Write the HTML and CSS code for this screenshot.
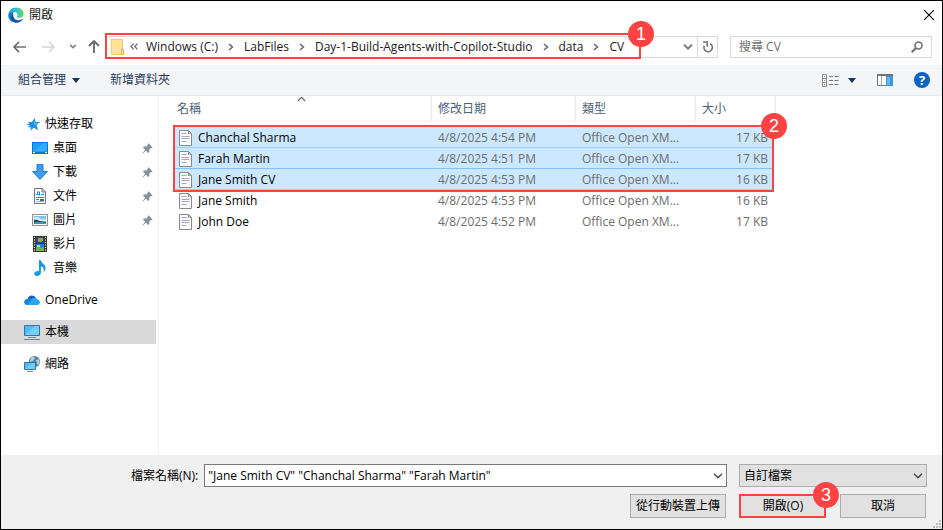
FILE: index.html
```html
<!DOCTYPE html>
<html lang="zh-Hant">
<head>
<meta charset="utf-8">
<title>開啟</title>
<link rel="stylesheet" href="styles.css">
</head>
<body>
<svg class="defs" aria-hidden="true">
  <symbol id="chev-right" viewBox="0 0 6 8"><path d="M1 1l3.400 3L1 7" fill="none" stroke="#6b6b6b" stroke-width="1.600"/></symbol>
  <symbol id="chev-down" viewBox="0 0 10 6"><path d="M1 .8l4 4 4-4" fill="none" stroke="currentColor" stroke-width="1.300"/></symbol>
  <symbol id="pin" viewBox="0 0 12 12"><path d="M7.200.4l4.400 4.400-1.200.9-.8-.2-1.700 1.900.1 2.300-1.200 1.200-2.400-2.500L.8 11.500l-.4-.4 3.200-3.700L1 4.900l1.200-1.200 2.400.2L6.500 2l-.2-.8z" fill="#84929d"/></symbol>
  <symbol id="doc" viewBox="0 0 13 16"><path d="M.5.5h9l3 3v12H.5z" fill="#fafafa" stroke="#8a8a8a"/><path d="M9 0v4h4z" fill="#8a8a8a"/><path d="M10 2v1.500h1.500z" fill="#fff"/><path d="M2.500 3.500h5M2.500 6.500h8M2.500 8.500h8M2.500 11.500h5" stroke="#a9a6c6"/></symbol>
</svg>
<div class="window">
  <header class="titlebar">
    <svg class="edge" viewBox="0 0 17 17"><defs><linearGradient id="eg" x1="0" x2="1"><stop offset="0" stop-color="#199bdc"/><stop offset=".5" stop-color="#2fc2d2"/><stop offset="1" stop-color="#69d55b"/></linearGradient></defs><path d="M.3 9C.5 3.800 4 .4 8.600.4c4.700 0 8 3.100 8 6.700 0 2.700-2.200 4.400-4.700 4.400-1.600 0-2.500-.5-2.500-1.100 0-.5.8-.8.8-2.100 0-1.600-1.600-3-3.900-3C3.400 5.300.9 6.700.3 9z" fill="url(#eg)"/><path d="M.3 9c.3-2.600 2.900-3.800 5.600-3.700C3.700 9.500 6.500 14.500 10 15c-.9 1-1.800 1.500-3.200 1.300C3 15.800.2 12.700.3 9z" fill="#1478cf"/><path d="M5.700 8c-.8 4 2.800 6.600 6 6.100 1.500-.2 2.800-.9 3.600-1.300.4-.1.5.2.3.5-1.600 2.300-4.100 3.600-7 3.400-3.500-.5-5.500-3.500-5.300-6.200.1-1.300 1-2.200 2.400-2.500z" fill="#0e4f9b"/></svg>
    <h1>開啟</h1>
    <button class="bare close" aria-label="關閉"><svg viewBox="0 0 10 10"><path d="M0 0l10 10M10 0L0 10" stroke="#000" stroke-width="1.100"/></svg></button>
  </header>

  <div class="navrow">
    <nav class="history">
      <button class="bare" aria-label="上一頁"><svg class="arrow" viewBox="0 0 13 12"><path d="M6 .8L1 6l5 5.200M1 6h12" fill="none" stroke="#707070" stroke-width="1.700"/></svg></button>
      <button class="bare" aria-label="下一頁"><svg class="arrow" viewBox="0 0 13 12"><path d="M7 .8L12 6l-5 5.200M12 6H0" fill="none" stroke="#d5d5d5" stroke-width="1.600"/></svg></button>
      <button class="bare recent" aria-label="最近的位置"><svg class="tiny" viewBox="0 0 10 6"><path d="M1.500 1L5 4.500 8.500 1" fill="none" stroke="#808080" stroke-width="2"/></svg></button>
      <button class="bare" aria-label="上移"><svg class="up" viewBox="0 0 12 13"><path d="M1 6l5-5 5 5M6 1v12" fill="none" stroke="#6c6c6c" stroke-width="1.900"/></svg></button>
    </nav>
    <div class="address">
      <ol class="crumbs">
        <li><svg class="folder" viewBox="0 0 13 16"><path d="M0 0h12v10h1v6H0z" fill="#f2cf63"/><path d="M1 1h10v14H1z" fill="#ffe494"/><path d="M10.500 10h2v5.500h-2z" fill="#ffe69b" stroke="#dfb64c"/></svg></li>
        <li><svg class="more" viewBox="0 0 8 7"><path d="M3.600.6L1 3.500l2.600 2.900M7.400.6L4.800 3.500l2.600 2.900" fill="none" stroke="#6b6b6b" stroke-width="1.200"/></svg></li>
        <li><a href="#">Windows (C:)</a><svg class="sep"><use href="#chev-right"/></svg></li>
        <li><a href="#">LabFiles</a><svg class="sep"><use href="#chev-right"/></svg></li>
        <li><a href="#">Day-1-Build-Agents-with-Copilot-Studio</a><svg class="sep"><use href="#chev-right"/></svg></li>
        <li><a href="#">data</a><svg class="sep"><use href="#chev-right"/></svg></li>
        <li><a href="#">CV</a></li>
      </ol>
      <button class="bare history-drop" aria-label="先前的位置"><svg class="drop" viewBox="0 0 10 6"><path d="M1 .7l4 4 4-4" fill="none" stroke="#777" stroke-width="1.900"/></svg></button>
      <button class="bare refresh" aria-label="重新整理"><svg viewBox="0 0 12 13"><path d="M8 3.700A4.200 4.200 0 1 1 2.300 5.800" fill="none" stroke="#757575" stroke-width="1.700"/><path d="M1 2h4.200v4.500" fill="none" stroke="#757575" stroke-width="1.700"/></svg></button>
      <div class="mark mark-path"><span class="badge">1</span></div>
    </div>
    <div class="search">
      <input type="search" placeholder="搜尋 CV" aria-label="搜尋 CV">
      <svg viewBox="0 0 12 12"><circle cx="7.500" cy="4.500" r="3.500" fill="none" stroke="#707070" stroke-width="1.600"/><path d="M5 7L.8 11.200" stroke="#707070" stroke-width="2.200"/></svg>
    </div>
  </div>

  <div class="toolbar">
    <button class="bare">組合管理<svg class="tri" viewBox="0 0 8 5"><path d="M0 0h8L4 5z" fill="#16365f"/></svg></button>
    <button class="bare">新增資料夾</button>
    <div class="tools">
      <button class="bare view" aria-label="檢視"><svg class="list-icon" viewBox="0 0 17 13"><path d="M.5.500h4v12h-4zM.5 4.500h4M.5 8.500h4" fill="#fff" stroke="#8b8b8b"/><path d="M2 2h1v1H2z" fill="#58a"/><path d="M2 6h1v1H2z" fill="#696"/><path d="M2 10h1v1H2z" fill="#c33"/><path d="M7 2.500h4M12.500 2.500h4M7 6.500h4M12.500 6.500h4M7 10.500h4M12.500 10.500h4" stroke="#777"/></svg><svg class="tri" viewBox="0 0 8 5"><path d="M0 0h8L4 5z" fill="#16365f"/></svg></button>
      <button class="bare" aria-label="預覽窗格"><svg class="pane" viewBox="0 0 16 12"><path d="M.5.500h15v11H.5z" fill="#fff" stroke="#747474"/><path d="M0 0h16v2H0z" fill="#747474"/><path d="M4.500 2v9" stroke="#aaa"/><path d="M9 2h7v10H9z" fill="#3996dc"/><path d="M10 3h3v8h-3z" fill="#67b5ee"/></svg></button>
      <button class="bare" aria-label="說明"><span class="help">?</span></button>
    </div>
  </div>

  <main class="body">
    <nav class="side">
      <a class="item root" href="#"><svg class="star" viewBox="0 0 14 13"><path d="M8.500 0l1.200 4 4.300-.1-3.500 2.900 1.600 5.400-4.300-2.500-3.600 3.100.8-3.600H1.500L4.300 7H0l3.500-1.600L2 4h4z" fill="#1e92e0"/><path d="M8.300 2.500l.7 2.400 2.500.2-2.200 1.500-1.500-.2z" fill="#63bff7"/></svg>快速存取</a>
      <a class="item" href="#"><svg class="icon" viewBox="0 0 16 16"><path d="M0 2h16v12H0z" fill="#0a77cf"/><path d="M1 3h14v8.500H1z" fill="#18a0fa"/><path d="M1 11.500L12 3h3v8.500z" fill="#35acfb"/><path d="M1 12.500h2M13 12.500h2" stroke="#fff"/></svg>桌面<svg class="pin"><use href="#pin"/></svg></a>
      <a class="item" href="#"><svg class="icon" viewBox="0 0 16 16"><path d="M5 .5h6v7h4.500L8 15.500.5 7.500H5z" fill="#3e9be9" stroke="#2a7fce"/></svg>下載<svg class="pin"><use href="#pin"/></svg></a>
      <a class="item" href="#"><svg class="icon" viewBox="0 0 16 16"><path d="M2.500.5h8l3 3v12h-11z" fill="#fff" stroke="#777"/><path d="M10 0v4h4" fill="#ccc" stroke="#777"/><path d="M4 6.500h3M6 3.500L5 7M5.500 4h2v3.500M9 6.500h3M4 9.500h8M4 11.500h3" fill="none" stroke="#2386d0"/><path d="M4 13.500h8" stroke="#8bb6d6"/><path d="M8 11h4v2H8z" fill="#326b7c"/></svg>文件<svg class="pin"><use href="#pin"/></svg></a>
      <a class="item" href="#"><svg class="icon" viewBox="0 0 16 16"><path d="M.5 2.500h15v11H.5z" fill="#fff" stroke="#8f8f8f"/><path d="M2 4h12v8H2z" fill="#7fc3ee"/><path d="M2 6q3-2 5 0t7 1v2H2z" fill="#dceef4"/><path d="M2 7.500q4 0 6 1.500l6 1v2H2z" fill="#234f52"/><path d="M2 10.500q5-1.500 12 .5v1H2z" fill="#4b91b5"/></svg>圖片<svg class="pin"><use href="#pin"/></svg></a>
      <a class="item" href="#"><svg class="icon" viewBox="0 0 16 16"><path d="M1 0h14v16H1z" fill="#3b3b3b"/><path d="M2.500 1v15M13.500 1v15" stroke="#fff" stroke-dasharray="1 1.500"/><path d="M4 1h8v6H4z" fill="#294b78"/><path d="M4 8h8v7H4z" fill="#3b74d8"/><circle cx="8" cy="4" r="2.300" fill="#d78b35"/><path d="M9 2h2v3H9z" fill="#74bb55"/><path d="M4 12l3-2 2 2 3-1v4H4z" fill="#72b54c"/><path d="M5 9h3v2H5z" fill="#edcb55"/></svg>影片</a>
      <a class="item" href="#"><svg class="icon" viewBox="0 0 16 16"><path d="M7 0h1.800c0 3 4.800 4.200 4.800 8 0 2-1 3.500-2 4.200.5-2.800.3-5-2.700-5.700v6.100C8.900 14.700 7 16 5 16c-1.700 0-2.800-.9-2.800-2.200C2.200 12 4.500 10.800 7 11z" fill="#109be8"/></svg>音樂</a>
      <a class="item top" href="#"><svg class="icon" viewBox="0 0 16 16"><path d="M3.500 7.500C4 4 8.500 1.500 12 6l-3 4z" fill="#0c62bb"/><path d="M3.200 7c3-.7 4.300.8 7 2.300L5 13H3C-.8 12.800-.9 7.300 3.200 7z" fill="#1686d9"/><path d="M7 8c1.500-2.700 4.500-3 6-.7 3.500.2 4 5.700.2 5.700H3.500z" fill="#2aa4ee"/></svg>OneDrive</a>
      <a class="item top current" href="#" aria-current="page"><svg class="icon" viewBox="0 0 16 16"><path d="M.5 1.500h15v10H.5z" fill="#4dbbff" stroke="#3a7296"/><path d="M1 11L11 2h4v9z" fill="#75ccff"/><path d="M4 13.500h8M0 15.500h16" stroke="#718a9c"/></svg>本機</a>
      <a class="item top" href="#"><svg class="icon" viewBox="0 0 16 16"><circle cx="10.500" cy="5.500" r="5.500" fill="#52819b"/><path d="M7 2q3-2 4 0L9 5 6 6zM12 4l3-1 .5 4-2 2z" fill="#b6d6df"/><path d="M.5 6.500h11v7H.5z" fill="#4dbbff" stroke="#3a7296"/><path d="M1 13l7-6h3v6z" fill="#75ccff"/><path d="M3 15.500h6" stroke="#718a9c"/></svg>網路</a>
    </nav>

    <section class="files">
      <svg class="sort"><use href="#chev-down"/></svg>
      <table>
        <colgroup><col class="c-name"><col class="c-date"><col class="c-type"><col class="c-size"></colgroup>
        <thead><tr><th><span>名稱</span></th><th><span>修改日期</span></th><th><span>類型</span></th><th><span>大小</span></th></tr></thead>
        <tbody>
          <tr class="selected"><td><svg class="doc"><use href="#doc"/></svg>Chanchal Sharma</td><td>4/8/2025 4:54 PM</td><td>Office Open XM...</td><td>17 KB</td></tr>
          <tr class="selected before-focus"><td><svg class="doc"><use href="#doc"/></svg>Farah Martin</td><td>4/8/2025 4:51 PM</td><td>Office Open XM...</td><td>17 KB</td></tr>
          <tr class="selected"><td><svg class="doc"><use href="#doc"/></svg>Jane Smith CV</td><td>4/8/2025 4:53 PM</td><td>Office Open XM...</td><td>16 KB</td></tr>
          <tr><td><svg class="doc"><use href="#doc"/></svg>Jane Smith</td><td>4/8/2025 4:53 PM</td><td>Office Open XM...</td><td>16 KB</td></tr>
          <tr><td><svg class="doc"><use href="#doc"/></svg>John Doe</td><td>4/8/2025 4:52 PM</td><td>Office Open XM...</td><td>17 KB</td></tr>
        </tbody>
      </table>
      <div class="mark mark-files"><span class="badge">2</span></div>
    </section>
  </main>

  <footer class="footer">
    <div class="line">
      <label for="filename">檔案名稱(N):</label>
      <div class="field name-field"><input id="filename" type="text" value='"Jane Smith CV" "Chanchal Sharma" "Farah Martin"'><svg class="drop"><use href="#chev-down"/></svg></div>
      <div class="field type-field"><select aria-label="檔案類型"><option>自訂檔案</option></select><svg class="drop"><use href="#chev-down"/></svg></div>
    </div>
    <div class="line actions">
      <button class="btn upload">從行動裝置上傳</button>
      <div class="open-wrap"><button class="btn primary">開啟(O)</button><div class="mark mark-open"><span class="badge">3</span></div></div>
      <button class="btn">取消</button>
    </div>
    <svg class="grip" viewBox="0 0 8 8"><path d="M6 0h2v2H6zM3 3h2v2H3zM6 3h2v2H6zM0 6h2v2H0zM3 6h2v2H3zM6 6h2v2H6z" fill="#bcbcbc"/></svg>
  </footer>
</div>
</body>
</html>
```
FILE: styles.css
```css
* { box-sizing: border-box; }
body {
  margin: 0;
  font: 12px/20px "Open Sans", "Noto Sans CJK TC", sans-serif;
  color: #1a1a1a;
}
svg { display: block; flex: none; }
.defs { position: absolute; width: 0; height: 0; }
button, input, select { font: inherit; color: inherit; margin: 0; }
a { color: inherit; text-decoration: none; }
.bare { border: 0; padding: 0; background: none; display: flex; align-items: center; }

.window {
  min-height: 100vh;
  display: flex;
  flex-direction: column;
  border: 1px solid #000;
  background: #fff;
}

.titlebar { display: flex; align-items: center; height: 27px; padding: 0 8px 0 7px; }
.edge { width: 16px; height: 16px; }
h1 { margin: 0 0 0 5px; font-size: 12px; font-weight: 400; flex: 1; }
.close svg { width: 10px; height: 10px; }

.navrow { display: flex; align-items: center; height: 37px; padding: 0 10px 0 12px; }
.history { display: flex; align-items: center; width: 92px; }
.arrow { width: 13px; height: 12px; margin-right: 16px; }
.tiny { width: 8px; height: 5px; margin: 0 11px 0 -2px; }
.up { width: 12px; height: 13px; }
.address {
  position: relative;
  flex: 1;
  display: flex;
  height: 22px;
  border: 1px solid #d9d9d9;
}
.crumbs { display: flex; align-items: center; flex: 1; margin: 0; padding: 0 0 0 5px; list-style: none; }
.crumbs li { display: flex; align-items: center; white-space: nowrap; }
.folder { width: 13px; height: 16px; margin-right: 6px; }
.more { width: 8px; height: 7px; margin-right: 8px; }
.sep { width: 6px; height: 8px; margin: 0 10px; }
.drop { width: 10px; height: 6px; }
.history-drop { padding: 0 4px; }
.refresh { width: 20px; justify-content: center; border-left: 1px solid #d9d9d9; }
.refresh svg { width: 12px; height: 13px; }
.search {
  display: flex;
  align-items: center;
  width: 202px;
  height: 22px;
  margin-left: 12px;
  padding: 0 8px;
  border: 1px solid #d9d9d9;
}
.search input { flex: 1; min-width: 0; border: 0; padding: 0; outline: 0; background: none; appearance: none; }
.search input::placeholder { color: #6d6d6d; opacity: 1; }
.search svg { width: 12px; height: 12px; }

.toolbar {
  display: flex;
  align-items: center;
  gap: 30px;
  height: 31px;
  padding: 0 12px 0 17px;
  background: #f4f5f7;
  border-bottom: 1px solid #e6e8ea;
  color: #1e395b;
}
.tri { width: 8px; height: 5px; margin-left: 6px; }
.view .tri { margin-left: 9px; }
.tools { display: flex; align-items: center; gap: 21px; margin-left: auto; }
.list-icon { width: 17px; height: 13px; }
.pane { width: 16px; height: 12px; }
.help {
  width: 16px;
  height: 16px;
  border-radius: 50%;
  background: #0a63c2;
  color: #fff;
  font: bold 13px/16px "Open Sans", sans-serif;
  text-align: center;
}

.body { flex: 1; display: flex; }
.side { width: 158px; padding: 16px 2px 0 0; border-right: 1px solid #f0f0f0; color: #000; }
.item { display: flex; align-items: center; height: 24px; padding: 0 3px 0 31px; }
.item.root { padding-left: 25px; }
.item.top { padding-left: 23px; margin-top: 8px; }
.current { background: #d9d9d9; }
.icon { width: 16px; height: 16px; margin-right: 5px; }
.star { width: 14px; height: 13px; margin-right: 5px; }
.pin { width: 11px; height: 11px; margin-left: auto; }

.files { position: relative; flex: 1; padding-left: 14px; }
.sort { position: absolute; left: 138px; top: 0; width: 9px; height: 6px; transform: rotate(180deg); color: #666; }
table { width: 603px; table-layout: fixed; border-collapse: collapse; color: #6d6d6d; }
.c-name { width: 259px; }
.c-date { width: 144px; }
.c-type { width: 120px; }
.c-size { width: 80px; }
th { padding: 0 0 6px; text-align: left; font-weight: 400; color: #4c607a; }
th span { display: block; height: 25px; padding-left: 6px; line-height: 25px; border-right: 1px solid #e5e5e5; }
th:first-child span { padding-left: 4px; }
td { height: 21px; padding: 0 0 0 6px; white-space: nowrap; }
td:first-child { display: flex; align-items: center; color: #000; }
td:last-child { text-align: right; padding-right: 8px; }
.doc { width: 13px; height: 16px; margin-right: 6px; }
.selected { background: #cce8ff; box-shadow: inset 0 -1px #99d1ff; }
.before-focus { box-shadow: inset 0 -1px #7fc1f8; }
.selected td:last-child { background: linear-gradient(to left, #fff 2px, transparent 2px); }

.mark { position: absolute; border: 2px solid #ff4343; pointer-events: none; }
.mark-path { left: -1px; top: -4px; width: 536px; height: 26px; }
.mark-files { left: 14px; top: 29px; width: 601px; height: 67px; }
.mark-open { inset: 0 0 0 -1px; }
.badge {
  position: absolute;
  right: -15px;
  top: -14px;
  width: 26px;
  height: 26px;
  border-radius: 50%;
  background: #ff4343;
  color: #fff;
  font: 18px/26px "Liberation Sans", sans-serif;
  text-align: center;
}

.footer { position: relative; padding: 9px 15px 11px 130px; background: #f0f0f0; color: #000; }
.line { display: flex; align-items: center; }
label { margin-right: 6px; white-space: nowrap; }
.field { position: relative; display: flex; align-items: center; height: 23px; }
.field input, .field select { width: 100%; height: 100%; border: 1px solid #7a7a7a; border-radius: 0; padding: 0 20px 0 3px; background: #fff; outline: 0; appearance: none; }
.field .drop { position: absolute; right: 4px; color: #444; }
.name-field { flex: 1; }
.type-field { width: 188px; margin-left: 12px; }
.field select { border-color: #adadad; background: #e1e1e1; padding-left: 4px; }
.actions { justify-content: flex-end; gap: 14px; margin-top: 7px; padding-right: 1px; }
.btn { width: 86px; height: 24px; padding: 0; border: 1px solid #adadad; background: #e1e1e1; white-space: nowrap; }
.upload { width: 96px; }
.open-wrap { position: relative; display: flex; }
.primary { border-color: #0078d7; }
.grip { position: absolute; right: 1px; bottom: 1px; width: 8px; height: 8px; }
```
